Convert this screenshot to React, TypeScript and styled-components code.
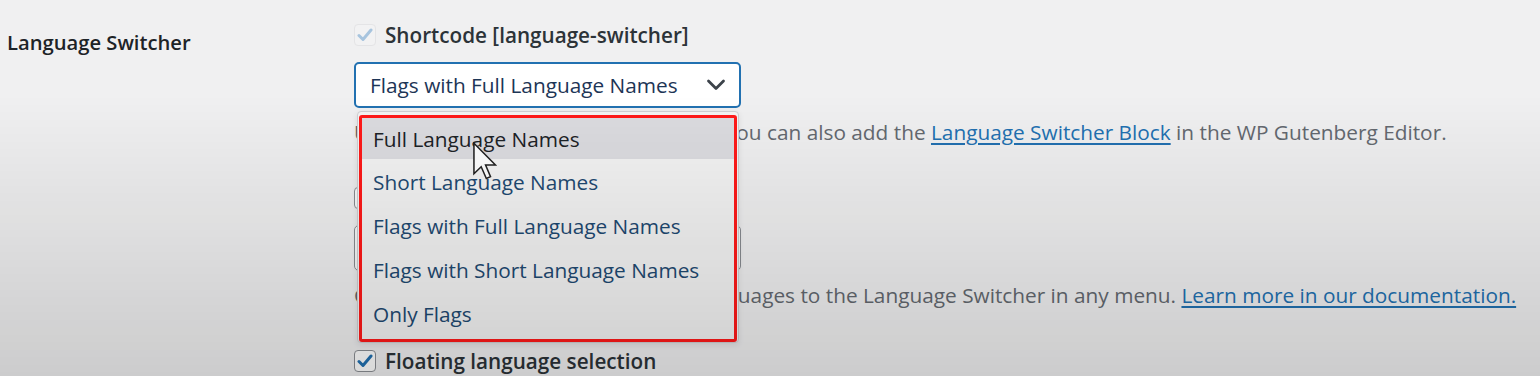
import styled, { createGlobalStyle } from "styled-components";

const GlobalStyle = createGlobalStyle`
    html, body { margin: 0; padding: 0; }
    body {
        width: 1540px; height: 376px; overflow: hidden;
        background: #f0f0f1;
        font-family: "Open Sans", "Noto Sans", sans-serif;
        color: #1d2327;
    }
`

const menuOptions = [
    "Full Language Names",
    "Short Language Names",
    "Flags with Full Language Names",
    "Flags with Short Language Names",
    "Only Flags",
];

const Chevron = () => (
    <svg width="20" height="12" viewBox="0 0 20 12">
        <polyline points="2.5,2 10,9.5 17.5,2" fill="none" stroke="#3c434a" strokeWidth="2.8" strokeLinecap="round" strokeLinejoin="round" />
    </svg>
)

const Tick = ({ color }: { color: string }) => (
    <svg width="16" height="14" viewBox="0 0 16 14">
        <polyline points="2,7.5 6,11.5 14,2" fill="none" stroke={color} strokeWidth="3" strokeLinecap="round" strokeLinejoin="round" />
    </svg>
)

const Cursor = () => (
    <CursorWrap>
        <svg width="24" height="38" viewBox="0 0 12.6 19.6">
            <path d="M0.5 0.5 L0.5 16.5 L4.3 12.8 L7 19 L9.2 18 L6.6 11.9 L11.8 11.9 Z" fill="#fff" stroke="#222" strokeWidth="0.8" strokeLinejoin="miter" />
        </svg>
    </CursorWrap>
)

const App = () => {
    return (
        <>
            <GlobalStyle />
            <Page>
                <Label>Language Switcher</Label>
                <Field>
                    <Section $after={42}>
                        <CheckRow>
                            <CheckBox $disabled><Tick color="#a7c4de" /></CheckBox>
                            <CheckText>Shortcode [language-switcher]</CheckText>
                        </CheckRow>
                        <SelectWrap>
                            <Select $focused>
                                <span>Flags with Full Language Names</span>
                                <Chevron />
                            </Select>
                            <Menu>
                                <Marked>
                                    {menuOptions.map((opt, i) => (
                                        <Option key={opt} $active={i === 0}>{opt}</Option>
                                    ))}
                                </Marked>
                                <Cursor />
                            </Menu>
                        </SelectWrap>
                        <Desc>
                            Use shortcode on any page or widget. You can also add the <a>Language Switcher Block</a> in the WP Gutenberg Editor.
                        </Desc>
                    </Section>
                    <Section $after={42}>
                        <CheckRow>
                            <CheckBox><Tick color="#2271b1" /></CheckBox>
                            <CheckText>Menu item</CheckText>
                        </CheckRow>
                        <SelectWrap>
                            <Select>
                                <span>Flags with Full Language Names</span>
                                <Chevron />
                            </Select>
                        </SelectWrap>
                        <Desc>
                            Go to Appearance -&gt; Menus to add languages to the Language Switcher in any menu. <a>Learn more in our documentation.</a>
                        </Desc>
                    </Section>
                    <Section $after={0}>
                        <CheckRow>
                            <CheckBox><Tick color="#2271b1" /></CheckBox>
                            <CheckText>Floating language selection</CheckText>
                        </CheckRow>
                    </Section>
                </Field>
            </Page>
            <Shade />
        </>
    )
}

const Page = styled.div`
    display: flex;
    padding: 24px 0 0 7px;
`

const Label = styled.div`
    width: 347px; flex-shrink: 0;
    margin-top: 5px;
    font-size: 20.2px; font-weight: 600; line-height: 26px;
    color: #1d2327;
`

const Field = styled.div`
    display: flex; flex-direction: column;
    width: 1180px;
`

const Section = styled.div<{ $after: number }>`
    display: flex; flex-direction: column;
    margin-bottom: ${({ $after }) => $after}px;
`

const CheckRow = styled.div`
    display: flex; align-items: center; gap: 9px;
    height: 22px;
`

const CheckBox = styled.div<{ $disabled?: boolean }>`
    width: 22px; height: 22px; box-sizing: border-box; flex-shrink: 0;
    display: flex; align-items: center; justify-content: center;
    border-radius: 4px;
    border: 1.5px solid ${({ $disabled }) => $disabled ? '#e4e4e6' : '#8c8f94'};
    background: ${({ $disabled }) => $disabled ? '#f2f2f3' : '#fff'};
`

const CheckText = styled.span`
    font-size: 20.7px; font-weight: 600; line-height: 26px;
    color: #2c3338;
`

const SelectWrap = styled.div`
    position: relative;
    margin-top: 16px;
    width: 387px;
`

const Select = styled.div<{ $focused?: boolean }>`
    height: 46px; box-sizing: border-box;
    display: flex; align-items: center; justify-content: space-between;
    padding: 0 13px 0 14px;
    background: #fff;
    border-radius: 5px;
    border: ${({ $focused }) => $focused ? '2px solid #2271b1' : '1px solid #8c8f94'};
    font-size: 20.8px; color: #1d3556;
`

const Menu = styled.div`
    position: absolute; z-index: 2;
    top: 49px; left: 3px;
    width: 382px; height: 232px; box-sizing: border-box;
    background: #f4f4f4;
    border: 1px solid #cfcfd2; border-radius: 4px;
    box-shadow: 0 2px 6px rgba(0,0,0,0.08);
    padding: 3px 1px 0 1px;
`

const Marked = styled.div`
    height: 227px; box-sizing: border-box;
    border: 3px solid #ff1a1a; border-radius: 3px;
    display: flex; flex-direction: column;
`

const Option = styled.div<{ $active?: boolean }>`
    height: 44px; flex-shrink: 0;
    display: flex; align-items: center;
    padding-left: 11px;
    font-size: 20.8px;
    color: ${({ $active }) => $active ? '#1d2327' : '#1f4a72'};
    background: ${({ $active }) => $active ? '#dcdce0' : 'transparent'};
    &:first-child { height: 41px; margin-bottom: 1px; }
`

const CursorWrap = styled.div`
    position: absolute;
    left: 115px; top: 30px;
    line-height: 0;
`

const Desc = styled.p`
    margin: 11px 0 0 0;
    font-size: 20.8px; line-height: 26px;
    color: #646970;
    white-space: nowrap;
    a { color: #2271b1; text-decoration: underline; text-underline-offset: 3px; }
`

const Shade = styled.div`
    position: fixed; inset: 0; pointer-events: none; z-index: 5;
    background: linear-gradient(to bottom, rgba(0,0,0,0) 0%, rgba(0,0,0,0) 25%, rgba(0,0,0,0.09) 70%, rgba(0,0,0,0.15) 100%);
`

export default App;
